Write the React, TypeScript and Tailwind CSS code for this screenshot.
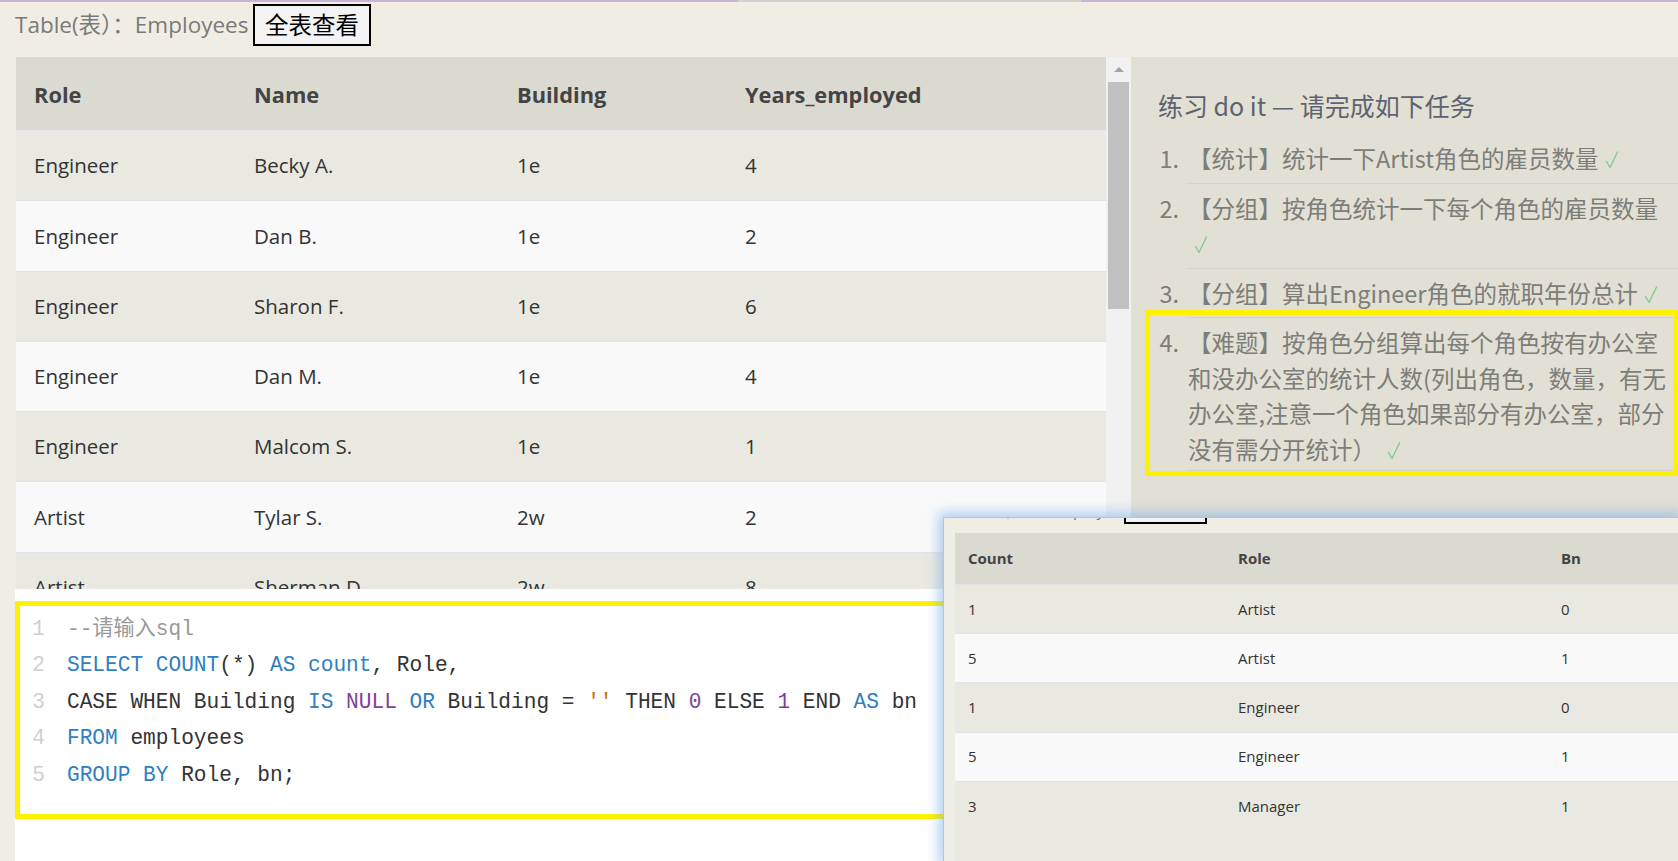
import React from "react";

const mainRows: string[][] = [
  ["Engineer", "Becky A.", "1e", "4"],
  ["Engineer", "Dan B.", "1e", "2"],
  ["Engineer", "Sharon F.", "1e", "6"],
  ["Engineer", "Dan M.", "1e", "4"],
  ["Engineer", "Malcom S.", "1e", "1"],
  ["Artist", "Tylar S.", "2w", "2"],
  ["Artist", "Sherman D.", "2w", "8"],
  ["Artist", "Jakob J.", "2w", "6"],
];

const resultRows: string[][] = [
  ["1", "Artist", "0"],
  ["5", "Artist", "1"],
  ["1", "Engineer", "0"],
  ["5", "Engineer", "1"],
  ["3", "Manager", "1"],
];

type Tok = [string, string];
const K = "text-[#2f7fc1]";
const P = "text-[#7d3f98]";
const S = "text-[#c8701d]";
const N = "text-[#333333]";
const C = "text-[#999999]";

const codeLines: Tok[][] = [
  [["--请输入sql", C]],
  [
    ["SELECT COUNT", K],
    ["(*) ", N],
    ["AS count", K],
    [", Role,", N],
  ],
  [
    ["CASE WHEN Building ", N],
    ["IS ", K],
    ["NULL ", P],
    ["OR ", K],
    ["Building = ", N],
    ["''", S],
    [" THEN ", N],
    ["0", P],
    [" ELSE ", N],
    ["1", P],
    [" END ", N],
    ["AS", K],
    [" bn", N],
  ],
  [
    ["FROM", K],
    [" employees", N],
  ],
  [
    ["GROUP BY", K],
    [" Role, bn;", N],
  ],
];

function Check() {
  return (
    <svg width="14" height="20" viewBox="0 0 14 20" className="inline-block align-[-2px] ml-[6px]">
      <path d="M1.5 11.5 L5 17.5 L12.5 2" fill="none" stroke="#7fcb90" strokeWidth="1.4" strokeLinecap="round" strokeLinejoin="round" />
    </svg>
  );
}

function TaskItem({ n, lines, pt = "pt-[7px]", pb = "pb-[6px]" }: { n: string; lines: React.ReactNode[]; pt?: string; pb?: string }) {
  return (
    <div className="flex">
      <div className={"w-[36px] shrink-0 text-right pr-[7px] leading-[35.5px] " + pt}>{n}</div>
      <div className={"flex-1 pl-[2px] border-b border-[#d6d4c9] leading-[35.5px] whitespace-nowrap " + pt + " " + pb}>
        {lines.map((l, i) => (
          <div key={i}>{l}</div>
        ))}
      </div>
    </div>
  );
}

export default function App() {
  return (
    <div className="w-[1678px] h-[861px] overflow-hidden relative bg-[#f0ede5] font-[Open_Sans,Noto_Sans_CJK_SC,sans-serif]">
      {/* top accent */}
      <div className="h-[2px] flex">
        <div className="w-[738px] bg-[#c7b5d8]" />
        <div className="w-[343px] bg-[#d4d2d0]" />
        <div className="flex-1 bg-[#c7b5d8]" />
      </div>

      {/* title row */}
      <div className="h-[55px] flex items-start pl-[15px]">
        <div className="mt-[7px] text-[22.5px] leading-[32px] text-[#7a7a7a] w-[238px] whitespace-nowrap">Table(表）：Employees</div>
        <button className="mt-[2px] w-[118px] h-[42px] border-2 border-black bg-[#f3f3f3] text-black text-[23.5px] leading-none font-[Noto_Sans_CJK_SC,sans-serif]">
          全表查看
        </button>
      </div>

      {/* main */}
      <div className="flex h-[804px]">
        {/* left column */}
        <div className="w-[1115px] ml-[16px] flex flex-col">
          <div className="h-[532px] flex">
            <div className="flex-1 overflow-hidden text-[20.5px] text-[#333]">
              <div className="grid grid-cols-[220px_263px_228px_1fr] h-[73px] pt-[4px] items-center bg-[#dadad0] font-bold text-[#444] text-[21.8px]">
                <div className="pl-[18px]">Role</div>
                <div className="pl-[18px]">Name</div>
                <div className="pl-[18px]">Building</div>
                <div className="pl-[18px]">Years_employed</div>
              </div>
              {mainRows.map((r, i) => (
                <div
                  key={i}
                  className={
                    "grid grid-cols-[220px_263px_228px_1fr] h-[70.3px] items-center border-t border-[#e1e3e7] " +
                    (i % 2 === 0 ? "bg-[#eae9e1]" : "bg-[#f9f9f9]")
                  }
                >
                  {r.map((c, j) => (
                    <div key={j} className="pl-[18px]">
                      {c}
                    </div>
                  ))}
                </div>
              ))}
            </div>
            {/* scrollbar */}
            <div className="w-[25px] bg-[#f1f1f1] flex flex-col items-center">
              <div className="h-[25px] flex items-center justify-center">
                <div className="w-0 h-0 border-l-[5px] border-r-[5px] border-b-[5px] border-l-transparent border-r-transparent border-b-[#a3a3a3]" />
              </div>
              <div className="w-[21px] h-[227px] bg-[#c1c1c1]" />
            </div>
          </div>

          {/* editor */}
          <div className="flex-1 bg-white pt-[12px] -ml-[1px]">
            <div className="h-[218px] border-[5px] border-[#fff200] pt-[5px] font-[Liberation_Mono,Noto_Sans_CJK_SC,monospace] text-[21.15px] leading-[36.4px] whitespace-pre">
              {codeLines.map((line, i) => (
                <div key={i} className="flex">
                  <div className="w-[25px] text-right text-[#cfcfcf]">{i + 1}</div>
                  <div className="pl-[22px]">
                    {line.map((t, j) => (
                      <span key={j} className={t[1]}>
                        {t[0]}
                      </span>
                    ))}
                  </div>
                </div>
              ))}
            </div>
          </div>
        </div>

        {/* right panel */}
        <div className="flex-1 h-[460px] bg-[#e2e0d5] font-[Noto_Sans_CJK_SC,sans-serif]">
          <div className="pl-[27px] mt-[31px] text-[25px] leading-[34px] text-[#5d6370] whitespace-nowrap">练习 do it — 请完成如下任务</div>
          <div className="mt-[12px] pl-[19px] text-[23.5px] text-[#7d7d7a]">
            <TaskItem n="1." lines={[<>【统计】统计一下Artist角色的雇员数量<Check /></>]} />
            <TaskItem n="2." lines={["【分组】按角色统计一下每个角色的雇员数量", <Check />]} />
            <TaskItem n="3." lines={[<>【分组】算出Engineer角色的就职年份总计<Check /></>]} />
            <div className="-ml-[5px] -mt-[8px] border-[5px] border-[#fff200]">
              <TaskItem
                n="4."
                pt="pt-[10px]"
                pb="pb-[3px]"
                lines={[
                  "【难题】按角色分组算出每个角色按有办公室",
                  "和没办公室的统计人数(列出角色，数量，有无",
                  "办公室,注意一个角色如果部分有办公室，部分",
                  <>没有需分开统计） <Check /></>,
                ]}
              />
            </div>
          </div>
        </div>
      </div>

      {/* result popup */}
      <div className="absolute left-[943px] top-[517px] w-[735px] h-[344px] bg-[#f0ede5] border-l border-t border-[#a9c7ee] shadow-[0_0_12px_4px_rgba(110,165,235,0.55)] overflow-hidden">
        <div className="-mt-[30px] h-[36px] flex items-end pl-[20px]">
          <div className="w-[160px] text-[16px] leading-[20px] text-[#777] mb-[4px] whitespace-nowrap">Table(表）：Employees</div>
          <div className="w-[83px] h-[30px] border-2 border-black bg-[#f3f3f3]" />
        </div>
        <div className="mt-[9px] ml-[11px] text-[15px] text-[#333] bg-[#eae9e1] h-[400px]">
          <div className="grid grid-cols-[270px_323px_1fr] h-[51px] items-center bg-[#dadad0] font-bold text-[#444]">
            <div className="pl-[13px]">Count</div>
            <div className="pl-[13px]">Role</div>
            <div className="pl-[13px]">Bn</div>
          </div>
          {resultRows.map((r, i) => (
            <div
              key={i}
              className={
                "grid grid-cols-[270px_323px_1fr] h-[49.2px] items-center border-t border-[#e1e3e7] " +
                (i % 2 === 0 ? "bg-[#eae9e1]" : "bg-[#f9f9f9]")
              }
            >
              {r.map((c, j) => (
                <div key={j} className="pl-[13px]">
                  {c}
                </div>
              ))}
            </div>
          ))}
        </div>
      </div>
    </div>
  );
}
